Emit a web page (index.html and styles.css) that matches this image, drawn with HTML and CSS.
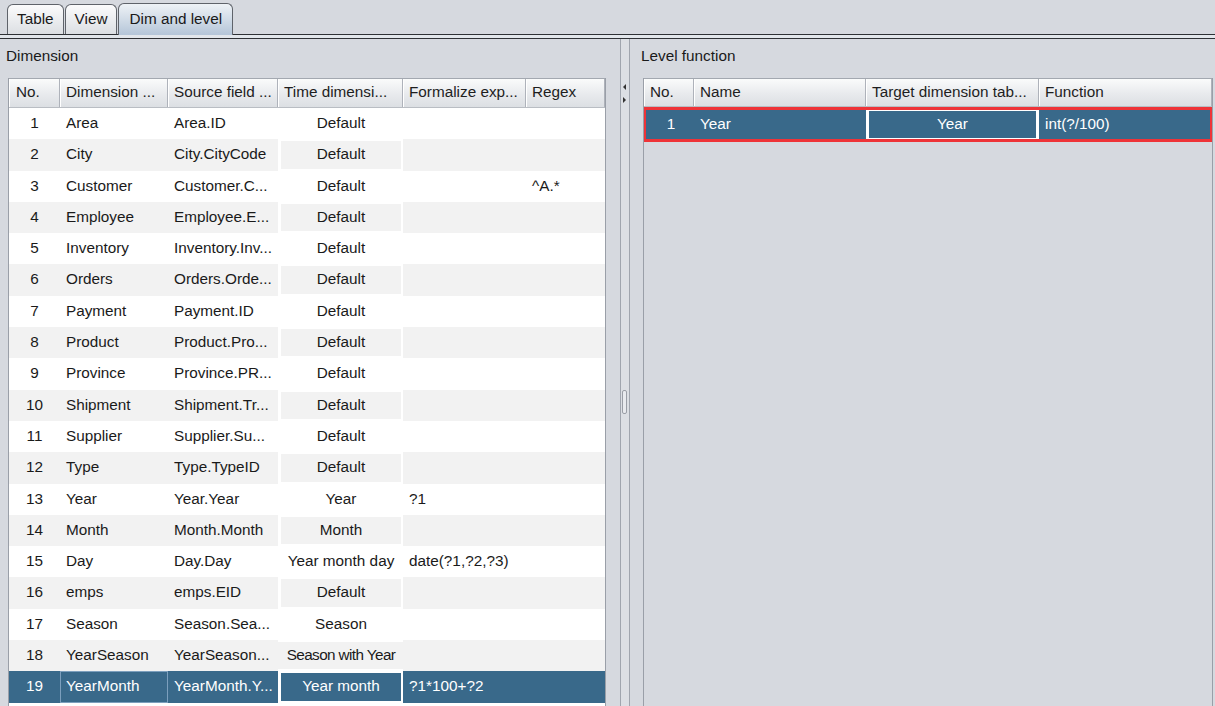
FILE: index.html
```html
<!DOCTYPE html>
<html>
<head>
    <meta charset="UTF-8">
    <title>Dim and level</title>
    <link rel="stylesheet" href="styles.css">
</head>
<body>
<div class="tabs">
    <div class="tab">Table</div>
    <div class="tab">View</div>
    <div class="tab active">Dim and level</div>
</div>
<div class="tab-rule"></div>

<div class="main">
    <!-- 维度表 -->
    <div class="pane left">
        <div class="caption">Dimension</div>
        <div class="grid dim">
            <div class="row head">
                <div class="cell">No.</div>
                <div class="cell">Dimension ...</div>
                <div class="cell">Source field ...</div>
                <div class="cell">Time dimensi...</div>
                <div class="cell">Formalize exp...</div>
                <div class="cell">Regex</div>
            </div>
            <div class="row">
                <div class="cell num">1</div><div class="cell">Area</div><div class="cell">Area.ID</div>
                <div class="cell time"><span>Default</span></div><div class="cell"></div><div class="cell"></div>
            </div>
            <div class="row alt">
                <div class="cell num">2</div><div class="cell">City</div><div class="cell">City.CityCode</div>
                <div class="cell time"><span>Default</span></div><div class="cell"></div><div class="cell"></div>
            </div>
            <div class="row">
                <div class="cell num">3</div><div class="cell">Customer</div><div class="cell">Customer.C...</div>
                <div class="cell time"><span>Default</span></div><div class="cell"></div><div class="cell">^A.*</div>
            </div>
            <div class="row alt">
                <div class="cell num">4</div><div class="cell">Employee</div><div class="cell">Employee.E...</div>
                <div class="cell time"><span>Default</span></div><div class="cell"></div><div class="cell"></div>
            </div>
            <div class="row">
                <div class="cell num">5</div><div class="cell">Inventory</div><div class="cell">Inventory.Inv...</div>
                <div class="cell time"><span>Default</span></div><div class="cell"></div><div class="cell"></div>
            </div>
            <div class="row alt">
                <div class="cell num">6</div><div class="cell">Orders</div><div class="cell">Orders.Orde...</div>
                <div class="cell time"><span>Default</span></div><div class="cell"></div><div class="cell"></div>
            </div>
            <div class="row">
                <div class="cell num">7</div><div class="cell">Payment</div><div class="cell">Payment.ID</div>
                <div class="cell time"><span>Default</span></div><div class="cell"></div><div class="cell"></div>
            </div>
            <div class="row alt">
                <div class="cell num">8</div><div class="cell">Product</div><div class="cell">Product.Pro...</div>
                <div class="cell time"><span>Default</span></div><div class="cell"></div><div class="cell"></div>
            </div>
            <div class="row">
                <div class="cell num">9</div><div class="cell">Province</div><div class="cell">Province.PR...</div>
                <div class="cell time"><span>Default</span></div><div class="cell"></div><div class="cell"></div>
            </div>
            <div class="row alt">
                <div class="cell num">10</div><div class="cell">Shipment</div><div class="cell">Shipment.Tr...</div>
                <div class="cell time"><span>Default</span></div><div class="cell"></div><div class="cell"></div>
            </div>
            <div class="row">
                <div class="cell num">11</div><div class="cell">Supplier</div><div class="cell">Supplier.Su...</div>
                <div class="cell time"><span>Default</span></div><div class="cell"></div><div class="cell"></div>
            </div>
            <div class="row alt">
                <div class="cell num">12</div><div class="cell">Type</div><div class="cell">Type.TypeID</div>
                <div class="cell time"><span>Default</span></div><div class="cell"></div><div class="cell"></div>
            </div>
            <div class="row">
                <div class="cell num">13</div><div class="cell">Year</div><div class="cell">Year.Year</div>
                <div class="cell time"><span>Year</span></div><div class="cell">?1</div><div class="cell"></div>
            </div>
            <div class="row alt">
                <div class="cell num">14</div><div class="cell">Month</div><div class="cell">Month.Month</div>
                <div class="cell time"><span>Month</span></div><div class="cell"></div><div class="cell"></div>
            </div>
            <div class="row">
                <div class="cell num">15</div><div class="cell">Day</div><div class="cell">Day.Day</div>
                <div class="cell time"><span>Year month day</span></div><div class="cell">date(?1,?2,?3)</div><div class="cell"></div>
            </div>
            <div class="row alt">
                <div class="cell num">16</div><div class="cell">emps</div><div class="cell">emps.EID</div>
                <div class="cell time"><span>Default</span></div><div class="cell"></div><div class="cell"></div>
            </div>
            <div class="row">
                <div class="cell num">17</div><div class="cell">Season</div><div class="cell">Season.Sea...</div>
                <div class="cell time"><span>Season</span></div><div class="cell"></div><div class="cell"></div>
            </div>
            <div class="row alt">
                <div class="cell num">18</div><div class="cell">YearSeason</div><div class="cell">YearSeason...</div>
                <div class="cell time"><span class="tight">Season with Year</span></div><div class="cell"></div><div class="cell"></div>
            </div>
            <div class="row sel">
                <div class="cell num">19</div><div class="cell focus">YearMonth</div><div class="cell">YearMonth.Y...</div>
                <div class="cell time"><span>Year month</span></div><div class="cell">?1*100+?2</div><div class="cell"></div>
            </div>
        </div>
    </div>

    <!-- 分隔条 -->
    <div class="splitter">
        <span class="arrow-left"></span>
        <span class="arrow-right"></span>
        <span class="grip"></span>
    </div>

    <!-- 层级函数 -->
    <div class="pane right">
        <div class="caption">Level function</div>
        <div class="grid level">
            <div class="row head">
                <div class="cell">No.</div>
                <div class="cell">Name</div>
                <div class="cell">Target dimension tab...</div>
                <div class="cell">Function</div>
            </div>
            <div class="row sel marked">
                <div class="cell num">1</div>
                <div class="cell">Year</div>
                <div class="cell target"><span>Year</span></div>
                <div class="cell">int(?/100)</div>
            </div>
        </div>
    </div>
</div>
</body>
</html>
```

FILE: styles.css
```css
/* 页面主题 */
body {
    margin: 0;
    height: 706px;
    overflow: hidden;
    background-color: #d6d9df;
    font-family: "Liberation Sans", Arial, sans-serif;
    font-size: 15.3px;
    color: #1a1a1a;
}

/* 选项卡 */
.tabs {
    display: flex;
    align-items: flex-end;
    height: 34px;
    padding-left: 7px;
    box-sizing: border-box;
}
.tab {
    height: 30px;
    line-height: 28px;
    padding: 0 9px;
    margin-right: 1px;
    border: 1px solid #5f636a;
    border-bottom: none;
    border-radius: 6px 6px 0 0;
    background: linear-gradient(#fbfbfc, #dcdfe3);
    box-sizing: border-box;
}
.tab.active {
    position: relative;
    z-index: 1;
    height: 32px;
    margin-bottom: -1px;
    padding: 0 10px;
    line-height: 29px;
    background: linear-gradient(#eef2f6, #b4c5d8);
}
.tab-rule {
    height: 3px;
    border-top: 1px solid #2e3135;
    border-bottom: 1px solid #2e3135;
    background-color: #e2e6eb;
}

/* 主区域 */
.main {
    display: flex;
    height: 667px;
}
.pane {
    box-sizing: border-box;
}
.left {
    width: 620px;
    padding: 0 14px 0 8px;
}
.right {
    flex: 1;
    padding: 0 2px 0 13px;
}
.caption {
    height: 20px;
    line-height: 20px;
    margin: 7px 0 12px -2px;
}

/* 表格 */
.grid {
    height: 628px;
    border-left: 1px solid #9a9fa8;
    border-right: 1px solid #9a9fa8;
    overflow: hidden;
}
.dim {
    background-color: #fff;
}
.level {
    background-color: #d6d9df;
}
.row {
    display: grid;
    height: 31.3px;
}
.dim .row {
    grid-template-columns: 51px 108px 110px 125px 123px 79px;
}
.level .row {
    grid-template-columns: 50px 172px 173px 173px;
}
.row.head {
    height: 30px;
    border-top: 1px solid #a3a8b0;
    border-bottom: 1px solid #b9bdc3;
    background: linear-gradient(#fafbfb, #e8eaed 55%, #dcdfe3);
    box-sizing: border-box;
    color: #1e1e1e;
}
.level .row.head {
    height: 29px;
}
.head .cell {
    line-height: 26px;
    padding-left: 6px;
    border-right: 1px solid #aeb2ba;
    box-shadow: inset 1px 0 #fff;
}
.dim .head .cell:first-child {
    padding-left: 7px;
}
.cell {
    padding-left: 6px;
    line-height: 29.5px;
    white-space: nowrap;
    overflow: hidden;
}
.cell.num {
    padding: 0;
    text-align: center;
}
.row.alt {
    background-color: #f2f2f2;
}
.row.sel {
    background-color: #39698a;
    color: #fff;
}

/* 时间维度单元格（白色内边框） */
.cell.time {
    padding: 2px 2px 2px 3px;
    background-color: #fff;
    text-align: center;
}
.cell.time span {
    display: block;
    height: 100%;
    line-height: 25.5px;
}
.alt .cell.time span {
    background-color: #f2f2f2;
}
.sel .cell.time span {
    background-color: #39698a;
}
.tight {
    letter-spacing: -0.6px;
    margin: 0 -4px;
}
.cell.focus {
    box-shadow: inset 0 0 0 1px #7c9fbd;
}

/* 右侧选中行 */
.row.marked {
    height: 35px;
    margin: 0 -1px;
    border: 3px solid #ee3338;
    box-sizing: border-box;
}
.level .row.marked {
    grid-template-columns: 48px 172px 173px 171px;
}
.marked .cell {
    line-height: 28px;
}
.marked .cell.num {
    padding-left: 2px;
}
.cell.target {
    padding: 1px 3px;
    background-color: #fff;
    text-align: center;
}
.cell.target span {
    display: block;
    height: 100%;
    line-height: 26px;
    background-color: #39698a;
}

/* 分隔条 */
.splitter {
    display: flex;
    flex-direction: column;
    width: 10px;
    border-left: 1px solid #a0a5ae;
    border-right: 1px solid #a0a5ae;
    background-color: #dcdfe4;
    box-sizing: border-box;
}
.arrow-left, .arrow-right {
    width: 0;
    height: 0;
    margin-left: 2px;
    border-top: 3px solid transparent;
    border-bottom: 3px solid transparent;
}
.arrow-left {
    margin-top: 45px;
    border-right: 3px solid #333;
}
.arrow-right {
    margin-top: 7px;
    border-left: 3px solid #333;
}
.grip {
    width: 3px;
    height: 22px;
    margin: 287px 0 0 1px;
    border: 1px solid #9a9ea6;
    border-radius: 2px;
    background-color: #e8eaee;
}
```
